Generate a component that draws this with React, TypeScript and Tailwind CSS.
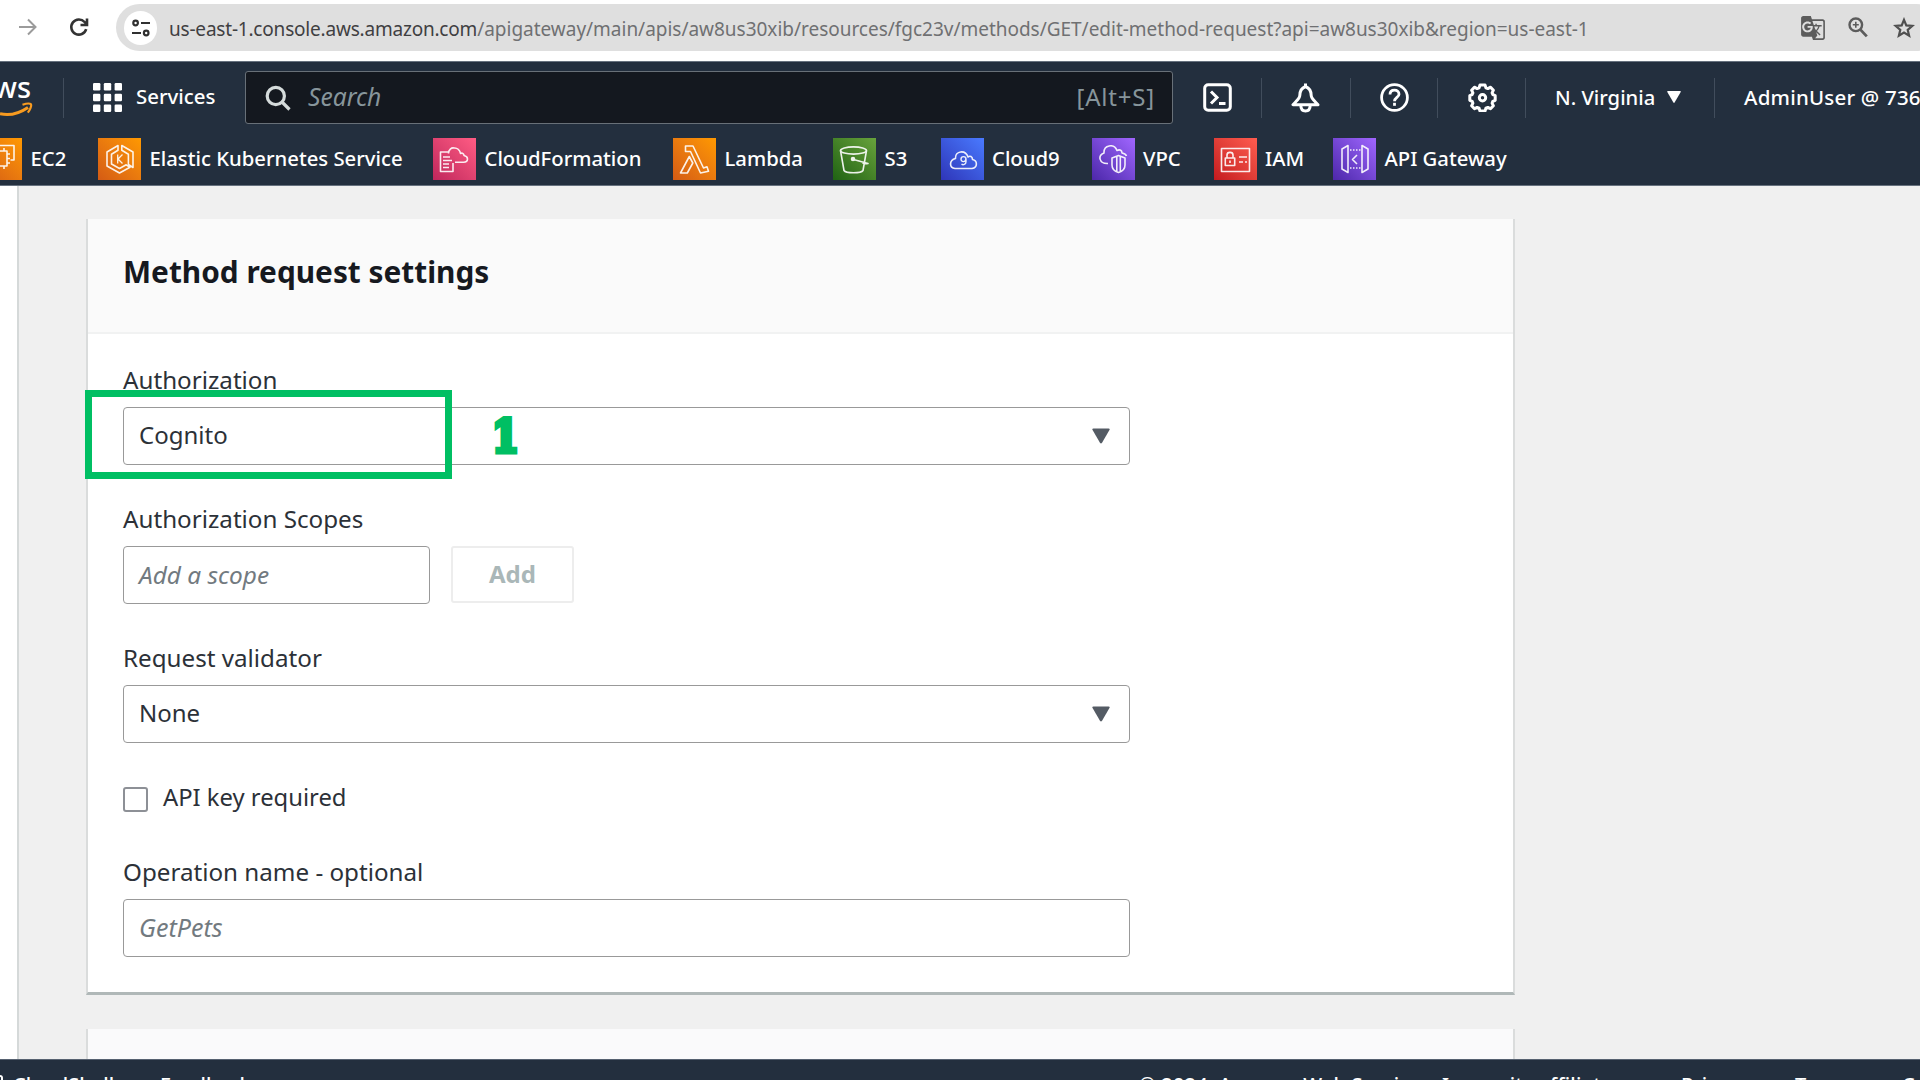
import React from "react";
import type { ReactNode } from "react";
import { MdGTranslate } from "react-icons/md";

function BrowserBar() {
  return (
    <div className="flex h-[61px] w-[1960px] shrink-0 items-start bg-white pt-1">
      <svg className="ml-[18px] mt-[14px] h-[18px] w-[20px]" viewBox="0 0 20 18" fill="none" stroke="#9b9b9b" strokeWidth="2">
        <path d="M1 9h16.5M10 1.5 17.5 9 10 16.5" />
      </svg>
      <svg className="ml-[31px] mt-[13px] h-5 w-5" viewBox="0 0 20 20" fill="none" stroke="#333" strokeWidth="2.6">
        <path d="M17.2 12.2A7.6 7.6 0 1 1 15.6 5L17.5 7" />
        <path d="M18 1.5V8h-6.5" />
      </svg>
      <div className="ml-[27px] flex h-[47px] w-[1824px] items-center rounded-full bg-[#dfdfdf] pl-2">
        <div className="flex h-[34px] w-[33px] items-center justify-center rounded-full bg-white">
          <svg className="h-[18px] w-[18px]" viewBox="0 0 18 18" fill="none" stroke="#303030" strokeWidth="2.2">
            <circle cx="3.6" cy="4" r="2.3" />
            <path d="M9 4h9M0 14h9" />
            <circle cx="14.2" cy="14" r="2.3" />
          </svg>
        </div>
        <div className="ml-[12px] mt-[2px] w-[1632px] whitespace-nowrap text-[19px] leading-[30px] tracking-[-0.02px] text-[#6f7072]">
          <span className="tracking-[-0.2px] text-[#3f4042]">us-east-1.console.aws.amazon.com</span>
          /apigateway/main/apis/aw8us30xib/resources/fgc23v/methods/GET/edit-method-request?api=aw8us30xib&amp;region=us-east-1
        </div>
        <MdGTranslate className="-ml-px h-[26px] w-[26px] text-[#5c5c5c]" />
        <svg className="ml-[22px] h-[21px] w-[20px]" viewBox="0 0 20 21" fill="none" stroke="#5c5c5c" strokeWidth="2.4">
          <circle cx="7.8" cy="7.8" r="6.300" />
          <path d="m12.400 12.600 6.400 6.800" strokeWidth="2.800" />
          <path d="M7.800 4.800v6M4.800 7.800h6" strokeWidth="1.600" />
        </svg>
        <svg className="ml-[25px] h-[21px] w-[22px]" viewBox="0 0 22 21" fill="none" stroke="#505050" strokeWidth="2.2" strokeLinejoin="miter">
          <path d="m11 2.800 2.300 5.600 6 .5-4.600 3.900 1.400 5.800L11 15.500l-5.100 3.100 1.400-5.800L2.700 8.900l6-.5Z" />
        </svg>
      </div>
    </div>
  );
}

function Divider({ className }: { className: string }) {
  return <div className={`h-10 w-px shrink-0 bg-[#414d5c] ${className}`} />;
}

function TopNav() {
  return (
    <div className="flex h-[71px] items-center">
      <div className="-mt-[4px] flex h-[48px] w-[33px] shrink-0 flex-col items-end overflow-hidden">
        <div className="mr-[2px] h-[30px] text-[29px] font-medium leading-[29px] text-white">aws</div>
        <svg className="h-[16px] w-[33px] shrink-0" viewBox="0 0 33 16" fill="none" stroke="#f79b20" strokeWidth="2.6">
          <path d="M0 11.8C10 14 20 11 28 5.5" strokeWidth="3" />
          <path d="M22.5 2.8C26.5 1.4 30 1.3 31 2.3 31.7 4 30 8 27.8 10.6" strokeWidth="2.2" />
        </svg>
      </div>
      <Divider className="ml-[30px]" />
      <svg className="ml-[29px] h-[29px] w-[29px] shrink-0" viewBox="0 0 29 29" fill="#fff">
        {[0, 10.8, 21.6].map((y) => [0, 10.8, 21.6].map((x) => <rect key={`${x}-${y}`} x={x} y={y} width="7.4" height="7.4" rx="1.2" />))}
      </svg>
      <div className="-mt-[3px] ml-[14px] w-[96px] shrink-0 text-[20.4px] font-medium text-white">Services</div>
      <div className="ml-[13px] flex h-[53px] w-[928px] shrink-0 items-center rounded-[3px] border-[1.5px] border-[#687078] bg-[#14181f] pl-[19px] pr-[17px]">
        <svg className="h-[26px] w-[26px]" viewBox="0 0 26 26" fill="none" stroke="#d5dbdb" strokeWidth="3.2">
          <circle cx="10.8" cy="11" r="8.6" />
          <path d="m17 17 7.5 7.5" />
        </svg>
        <div className="-mt-px ml-[17px] flex-1 text-[24.600px] italic leading-8 text-[#87959b]">Search</div>
        <div className="-mt-[2px] text-[24px] leading-8 tracking-[0.8px] text-[#87959b]">[Alt+S]</div>
      </div>
      <svg className="ml-[30px] h-[29px] w-[29px] shrink-0" viewBox="0 0 29 29" fill="none" stroke="#fff" strokeWidth="3">
        <rect x="1.7" y="1.7" width="25.6" height="25.6" rx="3.5" />
        <path d="m8 8.5 6 6-6 6M16 20.5h6.5" />
      </svg>
      <Divider className="ml-[29px]" />
      <svg className="ml-[29px] h-[30px] w-[29px] shrink-0" viewBox="0 0 29 30" fill="none" stroke="#fff" strokeWidth="3" strokeLinejoin="round">
        <path d="M14.5 3.5C10.800 5 8.800 8 8.800 12.500c0 3-3.400 5.500-6.800 9.200h25c-3.400-3.700-6.800-6.200-6.800-9.200 0-4.500-2-7.500-5.700-9Z" />
        <path d="M14.500 0.500v3M9.800 22c0 4 1.700 6 4.700 6s4.700-2 4.700-6" />
      </svg>
      <Divider className="ml-[30px]" />
      <svg className="ml-[29px] h-[29px] w-[29px] shrink-0" viewBox="0 0 29 29" fill="none" stroke="#fff" strokeWidth="2.8">
        <circle cx="14.5" cy="14.5" r="12.900" />
        <path d="M10 11.500c0-2.700 1.900-4.300 4.500-4.300s4.500 1.600 4.500 4c0 3-4.500 3.500-4.500 7" />
        <path d="M14.500 19.800v3" />
      </svg>
      <Divider className="ml-[28px]" />
      <svg className="ml-[30px] h-[29px] w-[29px] shrink-0" viewBox="0 0 29 29" fill="none" stroke="#fff" strokeWidth="3" strokeLinejoin="round">
        <path d="M12 1.900h5l.9 2.900 2 .8 2.700-1.400 2.800 3-1.300 2.600.8 1.900 2.300 1v4.600l-2.400 1-.7 1.900 1.300 2.600-2.900 3-2.600-1.400-2 .8-.9 2.900h-5l-.9-2.900-2-.8-2.600 1.400-2.900-3 1.300-2.600-.7-1.900-2.400-1v-4.600l2.300-1 .8-1.900-1.300-2.600 2.800-3 2.700 1.400 2-.8Z" />
        <circle cx="14.500" cy="14.700" r="3.200" />
      </svg>
      <Divider className="ml-[28px]" />
      <div className="ml-[29px] w-[112px] shrink-0 whitespace-nowrap text-[20.200px] font-medium text-white">N. Virginia</div>
      <svg className="-mt-px h-3 w-[14px] shrink-0" viewBox="0 0 14 12" fill="#fff">
        <path d="M.8 0h12.400q1 0 .5 1L7.600 11.500q-.6.900-1.200 0L.3 1Q-.2 0 .8 0Z" />
      </svg>
      <Divider className="ml-[33px]" />
      <div className="ml-[29px] shrink-0 whitespace-nowrap text-[20.500px] font-medium tracking-[0.2px] text-white">AdminUser @ 736</div>
    </div>
  );
}

type Favorite = { name: string; width: string; tile: string; icon: ReactNode };

const favorites: Favorite[] = [
  {
    name: "EC2",
    width: "w-[119px]",
    tile: "from-[#d45b14] to-[#ff9900]",
    icon: (
      <>
        <rect x="10" y="13" width="18" height="15" />
        <path d="M20 8.500V7.500h15V22h-3.500M15 13v-3M20 13v-3M25 13v-3M15 28v4M20 28v5M25 28v3M28 16h3M28 20.500h3M28 25h3" />
      </>
    ),
  },
  {
    name: "Elastic Kubernetes Service",
    width: "w-[335px]",
    tile: "from-[#d45b14] to-[#ff9900]",
    icon: (
      <>
        <path d="M20 7.500 9 14v14l12.500 7 10.500-5.700-3.800-2.500-6.700 3.700-8-4.500V16.200L20 12.300ZM23.800 7.500 35 14v15.500l-4.600-3V16.200l-6.600-3.900Z" />
        <path d="M19.700 16.500v9M24.500 16.500l-4.500 4.500 4.500 4.500" strokeWidth="1.300" />
      </>
    ),
  },
  {
    name: "CloudFormation",
    width: "w-[240px]",
    tile: "from-[#c0265c] to-[#ff5c84]",
    icon: (
      <>
        <path d="M16 14H7.500v19.500H20V25M10 19h7M10 22.500h9M10 26h6M10 29.500h6" />
        <path d="M15.500 15.500c0-4 3-6 5.500-5.500 3-.5 6 2 6.500 5.500 2-1 3.500.5 3.500 2 2 .5 3.500 1.800 3.500 3.500 0 2-1.500 3.200-4 3.200H22" />
      </>
    ),
  },
  {
    name: "Lambda",
    width: "w-[160px]",
    tile: "from-[#d45b14] to-[#ff9900]",
    icon: <path d="M12.500 8H20l10.500 22 3.500-1.200 1.500 4.400L27.500 35 17.500 13.500h-5ZM16.300 18.500l3.500 6.500-5.500 10H7.500Z" />,
  },
  {
    name: "S3",
    width: "w-[107.5px]",
    tile: "from-[#1f6313] to-[#68a33c]",
    icon: (
      <>
        <ellipse cx="20.500" cy="12.500" rx="13" ry="3.600" />
        <path d="m7.500 12.500 3.500 20c2 3 17 3 19 0l3.500-20M20.500 21.500 35 25.500c-3 .5-4 .2-5.500-.5" />
        <circle cx="20" cy="21" r="1.500" fill="#fff" />
      </>
    ),
  },
  {
    name: "Cloud9",
    width: "w-[151px]",
    tile: "from-[#2f35b9] to-[#4a7aff]",
    icon: (
      <>
        <path d="M14 30.500h17c6-1 5.500-8 .5-9 0-3-2.500-4-4.500-2.500-2.500-7.500-13-6.500-12.500 1.500-6.500 1.500-6.500 9.500-.5 10Z" />
        <path d="M25 20.500c0 4-5 4-5 .700 0-3.500 5-3.500 5 0v2.500c0 3-3 3.500-4.500 2.500" strokeWidth="1.400" />
      </>
    ),
  },
  {
    name: "VPC",
    width: "w-[122px]",
    tile: "from-[#4d27aa] to-[#a166ff]",
    icon: (
      <>
        <path d="M16 25.500c-9 .500-10.500-8-4-10.500-.5-8 10-10 13-2.500 3-1.500 5 0 5 2.500 2.500.5 4 1.500 4.500 3" />
        <path d="M26.500 17.500 33 20v7c0 4-3 6.500-6.500 7.500-3.500-1-6.500-3.500-6.500-7.500v-7ZM24.800 18.500v15M28.300 18.500v15" />
      </>
    ),
  },
  {
    name: "IAM",
    width: "w-[119.5px]",
    tile: "from-[#c4191f] to-[#ff5c4f]",
    icon: (
      <>
        <rect x="7.500" y="10.500" width="28" height="23" />
        <path d="M11.300 20h9.400v7.500h-9.400ZM13 20v-3c0-3.500 6-3.500 6 0v3M16 22.500v2.500M25 19h8M25 24h4M31 24h2" />
      </>
    ),
  },
  {
    name: "API Gateway",
    width: "w-[220px]",
    tile: "from-[#4d27aa] to-[#a166ff]",
    icon: (
      <>
        <path d="m15 7.500-6 3.500v20l6 3.500ZM29 7.500l6 3.500v20l-6 3.500ZM24 17l-4.500 4.500L24 26" />
        <path d="M17 12h11M17 30h11" strokeDasharray="1.500 1.500" />
      </>
    ),
  },
];

function FavoritesBar() {
  return (
    <div className="-ml-[21px] mt-[5px] flex">
      {favorites.map((f) => (
        <div key={f.name} className={`flex h-[42px] shrink-0 items-center ${f.width}`}>
          <div className={`h-[42px] w-[43px] shrink-0 bg-linear-to-tr ${f.tile}`}>
            <svg className="h-[42px] w-[43px] opacity-90" viewBox="0 0 43 42" fill="none" stroke="#fff" strokeWidth="1.600" strokeLinejoin="round">
              {f.icon}
            </svg>
          </div>
          <span className="-mt-[2px] ml-[8.500px] whitespace-nowrap text-[20.300px] font-medium text-white">{f.name}</span>
        </div>
      ))}
    </div>
  );
}

function Select({ value }: { value: string }) {
  return (
    <div className="flex h-[58px] w-[1007px] items-center justify-between rounded-[4px] border-[1.5px] border-[#999] pl-[15px] pr-[19px] text-[24px] text-[#2c3138]">
      <span className="-mt-[2px]">{value}</span>
      <svg className="h-4 w-[18px]" viewBox="0 0 19 16" fill="#545b64">
        <path d="M1.500 0h16q1.700 0 .9 1.700L10.600 15q-1.100 1.600-2.200 0L.6 1.700Q-.2 0 1.500 0Z" />
      </svg>
    </div>
  );
}

function Field({ label, children }: { label: string; children: ReactNode }) {
  return (
    <div>
      <div className="mb-[10px] h-[34px] text-[24.200px] leading-[34px] text-[#2c3138]">{label}</div>
      {children}
    </div>
  );
}

function SettingsCard() {
  return (
    <div className="relative h-[776px] w-[1429px] shrink-0 border-x-2 border-b-[3px] border-x-[#dadcdc] border-b-[#b0b8b8] bg-white">
      <div className="h-[115px] border-b-2 border-[#f1f2f2] bg-[#fafafa] pl-[35px] pt-[32px] text-[29.800px] font-bold leading-[42px] text-[#16191f]">
        Method request settings
      </div>
      <div className="flex flex-col gap-[37px] pl-[35px] pt-[29px]">
        <Field label="Authorization">
          <Select value="Cognito" />
        </Field>
        <Field label="Authorization Scopes">
          <div className="flex gap-[21px]">
            <div className="flex h-[58px] w-[307px] items-center rounded-[4px] border-[1.5px] border-[#999] pl-[15px] text-[24.400px] italic text-[#727a80]">
              Add a scope
            </div>
            <div className="flex h-[57px] w-[123px] items-center justify-center rounded-[3px] border-2 border-[#ededed] text-[24px] font-bold text-[#aab7b8]">
              <span className="-mt-px">Add</span>
            </div>
          </div>
        </Field>
        <Field label="Request validator">
          <Select value="None" />
        </Field>
        <div className="-mt-px flex h-[40px] items-center">
          <div className="h-[25px] w-[25px] rounded-[3px] border-[2px] border-[#8d9096]" />
          <div className="-mt-[2px] ml-[15px] text-[23.800px] text-[#2c3138]">API key required</div>
        </div>
        <div className="-mt-px">
          <Field label="Operation name - optional">
            <div className="flex h-[58px] w-[1007px] items-center rounded-[4px] border-[1.5px] border-[#999] pl-[15px] text-[25px] italic text-[#727a80]">
              GetPets
            </div>
          </Field>
        </div>
      </div>
      <div className="absolute -left-[3px] top-[171px] h-[89px] w-[367px] border-[7px] border-[#00bf63]" />
      <div className="absolute left-[404px] top-[185px] origin-left scale-x-[0.86] font-[DejaVu_Serif] text-[45px] font-bold leading-[66px] text-[#00bf63] [-webkit-text-stroke:5px_#00bf63]">
        1
      </div>
    </div>
  );
}

function Footer() {
  return (
    <div className="flex h-[53px] w-[2160px] shrink-0 whitespace-nowrap border-t-[1.5px] border-[#566170] bg-[#232f3e] pt-[9px] text-[20px] leading-[32px] text-white">
      <div className="mt-[6px] h-5 w-[3px] shrink-0 rounded-r-[3px] border-y-2 border-r-2 border-white" />
      <div className="ml-[10px] w-[147px] shrink-0 font-medium">CloudShell</div>
      <div className="w-[979px] shrink-0 font-medium">Feedback</div>
      <div className="w-[542px] shrink-0 font-medium tracking-[0.200px]">© 2024, Amazon Web Services, Inc. or its affiliates.</div>
      <div className="w-[114px] shrink-0 font-medium">Privacy</div>
      <div className="w-[107px] shrink-0 font-medium">Terms</div>
      <div className="shrink-0 font-medium">Cookie preferences</div>
    </div>
  );
}

export default function App() {
  return (
    <div className="flex h-[1080px] w-[1920px] flex-col overflow-hidden bg-[#f0f0f0] font-['Noto_Sans',sans-serif]">
      <BrowserBar />
      <div className="h-[125px] shrink-0 overflow-hidden border-y-[1.5px] border-[#66717e] bg-[#232f3e]">
        <TopNav />
        <FavoritesBar />
      </div>
      <div className="flex h-[873px] shrink-0 overflow-hidden">
        <div className="w-[19px] shrink-0 border-r-2 border-[#d5d9d9] bg-white" />
        <div className="ml-[67px] flex flex-col pt-[33px]">
          <SettingsCard />
          <div className="mt-[34px] h-[60px] w-[1429px] shrink-0 border-x-2 border-[#dadcdc] bg-[#fafafb]" />
        </div>
      </div>
      <Footer />
    </div>
  );
}
